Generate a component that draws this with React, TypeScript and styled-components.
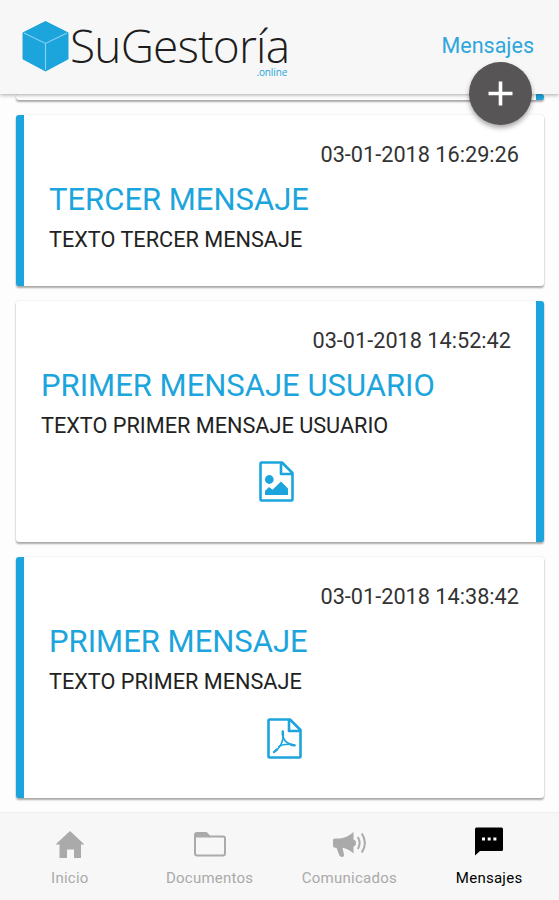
import React from "react";
import styled, { createGlobalStyle } from "styled-components";

const BLUE = "#1ca5dc";

const GlobalStyle = createGlobalStyle`
  * { box-sizing: border-box; }
  body { margin: 0; background: #fdfdfd; font-family: Roboto, "Liberation Sans", sans-serif; }
`;

const Screen = styled.div`
  width: 559px;
  height: 900px;
  display: flex;
  flex-direction: column;
  overflow: hidden;
`;

const Header = styled.header`
  position: relative;
  z-index: 1;
  flex: none;
  height: 94px;
  padding: 0 25px 0 22px;
  display: flex;
  justify-content: space-between;
  align-items: flex-start;
  background: #f7f7f7;
  box-shadow: 0 1px 4px rgba(0, 0, 0, 0.35);
`;

const Brand = styled.div`
  display: flex;
  padding-top: 20px;
`;

const BrandText = styled.div`
  display: flex;
  flex-direction: column;
  align-items: flex-end;
  padding-top: 3px;
  margin-left: 1px;
`;

const BrandName = styled.span`
  font: 300 46px/45px "Open Sans", sans-serif;
  letter-spacing: -0.8px;
  color: #1d1d1d;
  white-space: nowrap;
`;

const BrandSuffix = styled.span`
  font: 400 10px/8px "Open Sans", sans-serif;
  letter-spacing: -0.1px;
  padding-right: 2px;
  color: ${BLUE};
`;

const PageLink = styled.span`
  margin-top: 31px;
  font-size: 21.5px;
  line-height: 30px;
  color: #2fa6dc;
`;

const AddButton = styled.button`
  position: absolute;
  left: 469px;
  top: 62px;
  width: 63px;
  height: 63px;
  padding: 0;
  border: 0;
  border-radius: 50%;
  display: grid;
  place-items: center;
  background: #575555;
  box-shadow: 0 3px 5px rgba(0, 0, 0, 0.35);
`;

const Messages = styled.main`
  flex: 1;
  min-height: 0;
  overflow: hidden;
  padding: 0 15px 0 16px;
  display: flex;
  flex-direction: column;
  gap: 15px;
`;

const Card = styled.article<{ $side: "left" | "right"; $height: number }>`
  flex: none;
  height: ${(p) => p.$height}px;
  padding: 26px 25px 0;
  border-radius: 3px;
  border-${(p) => p.$side}: 8px solid ${BLUE};
  background: #fff;
  box-shadow: 0 2px 2px rgba(0, 0, 0, 0.32), 0 0 2px rgba(0, 0, 0, 0.12);
  display: flex;
  flex-direction: column;
`;

const PassedCard = styled(Card)`
  padding: 0;
`;

const Stamp = styled.time`
  align-self: flex-end;
  font-size: 21.7px;
  line-height: 28px;
  color: #333;
`;

const Title = styled.h2`
  margin: 12px 0 0;
  font-size: 31px;
  font-weight: 400;
  line-height: 38px;
  color: ${BLUE};
  white-space: nowrap;
`;

const Body = styled.p`
  margin: 7px 0 0;
  font-size: 21.7px;
  line-height: 28px;
  color: #222;
  white-space: nowrap;
`;

const Attachment = styled.div<{ $gap: number }>`
  display: flex;
  justify-content: center;
  margin-top: ${(p) => p.$gap}px;
`;

const TabBar = styled.nav`
  flex: none;
  height: 88px;
  display: grid;
  grid-template-columns: repeat(4, 1fr);
  background: #f7f7f7;
  border-top: 1px solid #eee;
`;

const Tab = styled.div<{ $active?: boolean }>`
  display: flex;
  flex-direction: column;
  align-items: center;
  color: ${(p) => (p.$active ? "#000" : "#aaa")};
`;

const TabIcon = styled.span`
  height: 54px;
  padding-top: 11px;
  display: flex;
`;

const TabLabel = styled.span`
  font-size: 15px;
  line-height: 22px;
  letter-spacing: 0.25px;
`;

const FilePage = () => (
  <path d="M1.5 2.5Q1.5 1.5 2.5 1.5H23L33.5 12V38.5Q33.5 39.5 32.5 39.5H2.5Q1.5 39.5 1.5 38.5ZM22 2V13H33" fill="none" stroke={BLUE} strokeWidth="2.6" strokeLinejoin="round" />
);

const ImageFile = () => (
  <svg width="35" height="41" viewBox="0 0 35 41">
    <FilePage />
    <circle cx="10.3" cy="18.5" r="4.4" fill={BLUE} />
    <path d="M6 34V30L10 26L13.5 28.8L22 20.5L29 27.5V34Z" fill={BLUE} />
  </svg>
);

const PdfFile = () => (
  <svg width="35" height="41" viewBox="0 0 35 41">
    <FilePage />
    <g fill="none" stroke={BLUE} strokeLinecap="round">
      <path d="M15.7 13.5C15.2 19 17 25.5 27.5 27.3" strokeWidth="1.6" />
      <path d="M16.2 14.5C17.3 22 13 30.5 7.2 34" strokeWidth="1.6" />
      <path d="M11.5 28.5C16.5 26 21 25.5 27.5 27" strokeWidth="1.3" />
      <path d="M15.8 13.5V17M7 34L10 31.4M24.5 27L27.7 27.4" strokeWidth="2.3" />
    </g>
  </svg>
);

const Cube = () => (
  <svg width="47" height="52" viewBox="0 0 47 52">
    <path d="M23.5 1.5L46 12.8V39L23.5 51L1 39V12.8Z" fill={BLUE} stroke={BLUE} strokeLinejoin="round" />
    <path d="M2 13L23.5 23.5L45 13M23.5 23.5V50" fill="none" stroke="#8bd2f0" strokeWidth="1.1" />
  </svg>
);

const HomeIcon = () => (
  <svg width="30" height="34" viewBox="0 0 30 34" fill="currentColor">
    <path d="M15 7L29.5 20.5H26V34H19V25.5H12V34H4.5V20.5H.5Z" />
  </svg>
);

const FolderIcon = () => (
  <svg width="34" height="34" viewBox="0 0 34 34">
    <path d="M2 12.5V10.5Q2 9 3.5 9H13L16.5 12.5V13.5H2Z" fill="currentColor" />
    <path d="M2 11Q2 9 4 9H13.2L16.5 12.5H30Q32 12.5 32 14.5V29Q32 31.5 30 31.5H4Q2 31.5 2 29Z" fill="none" stroke="currentColor" strokeWidth="2" strokeLinejoin="round" />
  </svg>
);

const MegaphoneIcon = () => (
  <svg width="34" height="34" viewBox="0 0 34 34">
    <path d="M1 16Q1 14.5 3 14.5H8C13 14.2 17.5 11.5 21.5 8V15.5Q24 16 24 19T21.5 22.5V29.5C18 26.3 14.5 24.5 10.5 23.8L12 30.8Q12.2 33 10 33Q8 33 7.2 31L4.5 23.8H3Q1 23.8 1 22Z" fill="currentColor" />
    <path d="M25.8 13Q29.5 19 25.8 25M29.8 9.5Q36 19 29.8 28.5" fill="none" stroke="currentColor" strokeWidth="2" />
  </svg>
);

const ChatIcon = () => (
  <svg width="28" height="34" viewBox="0 0 28 34">
    <path d="M0 5Q0 3.5 1.5 3.5H26.5Q28 3.5 28 5V25.5Q28 27 26.5 27H5L0 31.5Z" fill="currentColor" />
    <path d="M7 13.5H10V16.5H7ZM12.7 13.5H15.7V16.5H12.7ZM18.4 13.5H21.4V16.5H18.4Z" fill="#fff" />
  </svg>
);

const messages = [
  { side: "left", height: 171, date: "03-01-2018 16:29:26", title: "TERCER MENSAJE", text: "TEXTO TERCER MENSAJE", icon: null, gap: 0 },
  { side: "right", height: 241, date: "03-01-2018 14:52:42", title: "PRIMER MENSAJE USUARIO", text: "TEXTO PRIMER MENSAJE USUARIO", icon: <ImageFile />, gap: 21 },
  { side: "left", height: 241, date: "03-01-2018 14:38:42", title: "PRIMER MENSAJE", text: "TEXTO PRIMER MENSAJE", icon: <PdfFile />, gap: 22 },
] as const;

const tabs = [
  { label: "Inicio", icon: <HomeIcon /> },
  { label: "Documentos", icon: <FolderIcon /> },
  { label: "Comunicados", icon: <MegaphoneIcon /> },
  { label: "Mensajes", icon: <ChatIcon />, active: true },
];

export default function App() {
  return (
    <Screen>
      <GlobalStyle />
      <Header>
        <Brand>
          <Cube />
          <BrandText>
            <BrandName>SuGestoría</BrandName>
            <BrandSuffix>.online</BrandSuffix>
          </BrandText>
        </Brand>
        <PageLink>Mensajes</PageLink>
        <AddButton aria-label="Nuevo mensaje">
          <svg width="25" height="25" viewBox="0 0 25 25">
            <path d="M12.5 .5V24.5M.5 12.5H24.5" stroke="#fff" strokeWidth="3.6" />
          </svg>
        </AddButton>
      </Header>
      <Messages>
        <PassedCard $side="right" $height={6} />
        {messages.map((m) => (
          <Card key={m.date} $side={m.side} $height={m.height}>
            <Stamp>{m.date}</Stamp>
            <Title>{m.title}</Title>
            <Body>{m.text}</Body>
            {m.icon && <Attachment $gap={m.gap}>{m.icon}</Attachment>}
          </Card>
        ))}
      </Messages>
      <TabBar>
        {tabs.map((t) => (
          <Tab key={t.label} $active={t.active}>
            <TabIcon>{t.icon}</TabIcon>
            <TabLabel>{t.label}</TabLabel>
          </Tab>
        ))}
      </TabBar>
    </Screen>
  );
}
